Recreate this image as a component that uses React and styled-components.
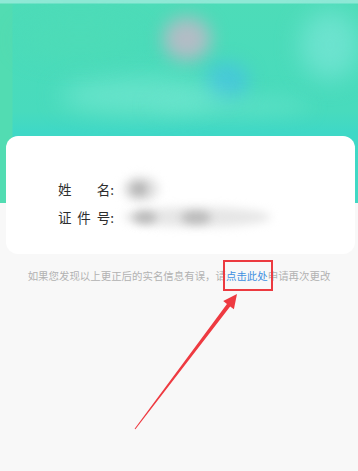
import React from "react";
import styled, { createGlobalStyle } from "styled-components";

const Global = createGlobalStyle`
  html, body { margin: 0; padding: 0; background: #f8f8f8; }
  body { font-family: "Noto Sans CJK SC", "Noto Sans", sans-serif; }
  * { box-sizing: border-box; }
`;

const Page = styled.div`
  position: relative;
  width: 358px;
  height: 471px;
  overflow: hidden;
  background: #f8f8f8;
  display: flex;
  flex-direction: column;
`;

const Header = styled.div`
  position: relative;
  height: 203px;
  flex: none;
  overflow: hidden;
  background:
    linear-gradient(180deg, #8fe9d6 0, #8fe9d6 3px, rgba(0,0,0,0) 4px),
    linear-gradient(90deg, #52dcb2 0, #52dcb2 12px, rgba(0,0,0,0) 13px),
    linear-gradient(180deg, #4ddcb8 0%, #48dbbd 55%, #3fd8c6 65%, #40d9c4 100%);
`;

const Glow = styled.div`
  position: absolute;
  top: ${(p) => p.t}px;
  left: ${(p) => p.l}px;
  width: ${(p) => p.w}px;
  height: ${(p) => p.h}px;
  border-radius: 50%;
  background: ${(p) => p.c};
  filter: blur(${(p) => p.b}px);
`;

const Card = styled.div`
  position: relative;
  margin: -67px 3px 0 6px;
  height: 118px;
  background: #ffffff;
  border-radius: 12px;
  padding: 43px 0 0 52px;
  display: flex;
  flex-direction: column;
  gap: 8px;
`;

const Row = styled.div`
  display: flex;
  align-items: center;
  height: 20px;
`;

const Label = styled.div`
  width: 56px;
  display: flex;
  justify-content: space-between;
  font-size: 13.5px;
  color: #2e2e2e;
  line-height: 20px;
`;

const Value = styled.div`
  position: relative;
  margin-left: 9px;
  width: ${(p) => p.w}px;
  height: 20px;
`;

const Blob = styled.div`
  position: absolute;
  top: ${(p) => p.t}px;
  left: ${(p) => p.l}px;
  width: ${(p) => p.w}px;
  height: ${(p) => p.h}px;
  border-radius: 50%;
  background: ${(p) => p.c};
  filter: blur(${(p) => p.b}px);
`;

const Note = styled.div`
  margin-top: 15px;
  text-align: center;
  font-size: 10.45px;
  line-height: 14px;
  color: #b2b2b2;
  white-space: nowrap;
`;

const Link = styled.span`
  position: relative;
  color: #3e8fe0;
  &::after {
    content: "";
    position: absolute;
    left: -3px;
    right: -5px;
    top: -8px;
    bottom: -8px;
    border: 2px solid #ec3a40;
  }
`;

const Overlay = styled.svg`
  position: absolute;
  left: 0;
  top: 0;
  pointer-events: none;
`;

export default function App() {
  return (
    <>
      <Global />
      <Page>
        <Header>
          <Glow t={17} l={163} w={48} h={44} c="rgba(205,180,200,0.8)" b={9} />
          <Glow t={62} l={205} w={44} h={38} c="rgba(70,195,225,0.75)" b={9} />
          <Glow t={78} l={60} w={160} h={36} c="rgba(130,235,215,0.55)" b={12} />
          <Glow t={96} l={150} w={160} h={20} c="rgba(120,232,212,0.4)" b={10} />
          <Glow t={10} l={300} w={60} h={70} c="rgba(130,232,220,0.6)" b={12} />
          <Glow t={20} l={20} w={120} h={40} c="rgba(80,220,180,0.4)" b={12} />
        </Header>
        <Card>
          <Row>
            <Label>
              <span>姓</span>
              <span>名:</span>
            </Label>
            <Value w={40}>
              <Blob t={-3} l={0} w={36} h={26} c="rgba(215,215,215,0.7)" b={5} />
              <Blob t={3} l={7} w={18} h={14} c="rgba(170,170,170,0.8)" b={4} />
            </Value>
          </Row>
          <Row>
            <Label>
              <span>证</span>
              <span>件</span>
              <span>号:</span>
            </Label>
            <Value w={150}>
              <Blob t={0} l={0} w={148} h={20} c="rgba(220,220,220,0.7)" b={5} />
              <Blob t={4} l={10} w={24} h={13} c="rgba(175,175,175,0.8)" b={4} />
              <Blob t={4} l={58} w={30} h={13} c="rgba(175,175,175,0.8)" b={4} />
            </Value>
          </Row>
        </Card>
        <Note>
          如果您发现以上更正后的实名信息有误，请<Link>点击此处</Link>申请再次更改
        </Note>
        <Overlay width="358" height="471" viewBox="0 0 358 471">
          <polygon
            fill="#ee3a41"
            points="134.6,428.7 226.96,303.96 223.2,301.1 237,294 233.9,309.3 230.16,306.38 135.4,429.3"
          />
        </Overlay>
      </Page>
    </>
  );
}
